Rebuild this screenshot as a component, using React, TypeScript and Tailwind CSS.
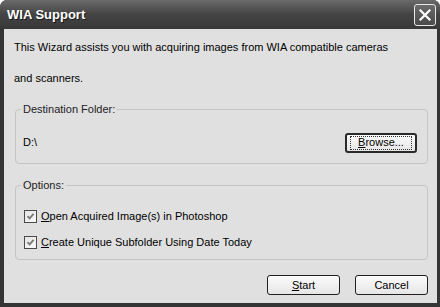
import React from "react";

function XpButton({
  children,
  isDefault,
  className,
}: {
  children: React.ReactNode;
  isDefault?: boolean;
  className?: string;
}) {
  return (
    <div
      className={
        "flex h-[20px] items-center justify-center rounded-[3px] bg-gradient-to-b from-[#fbfbfb] to-[#e6e6e6] text-[11px] text-black " +
        (isDefault ? "border-2 border-[#2a2a2a] " : "border border-[#202020] ") +
        (className ?? "")
      }
    >
      {isDefault ? (
        <span className="flex h-[14px] w-[calc(100%-6px)] items-center justify-center border border-dotted border-[#333]">
          {children}
        </span>
      ) : (
        children
      )}
    </div>
  );
}

function CheckRow({ accel, rest }: { accel: string; rest: string }) {
  return (
    <div className="flex items-center gap-[4px]">
      <div className="flex h-[13px] w-[13px] items-center justify-center border border-[#4a4a4a] bg-gradient-to-br from-[#e4e4e4] to-[#fafafa]">
        <svg width="9" height="9" viewBox="0 0 9 9">
          <path d="M1.5 4.2 L3.6 6.4 L7.6 1.8" fill="none" stroke="#7a7a7a" strokeWidth="1.9" />
        </svg>
      </div>
      <span className="text-[11px] leading-[13px] text-black">
        <span className="underline">{accel}</span>
        {rest}
      </span>
    </div>
  );
}

export default function App() {
  return (
    <div
      className="flex h-[307px] w-[440px] flex-col overflow-hidden rounded-t-[7px] bg-[#353535]"
      style={{ fontFamily: '"Liberation Sans", Arial, sans-serif' }}
    >
      {/* Title bar */}
      <div className="flex h-[29px] items-center justify-between bg-gradient-to-b from-[#6a6a6a] via-[#444] to-[#383838] pl-[7px] pr-[4px]">
        <span className="text-[13px] font-bold text-white [text-shadow:1px_1px_0_#1a1a1a]">WIA Support</span>
        <div className="flex h-[22px] w-[22px] items-center justify-center rounded-[3px] border border-[#e8e8e8] bg-gradient-to-b from-[#6a6a6a] to-[#4a4a4a]">
          <svg width="12" height="12" viewBox="0 0 12 12">
            <path d="M1.5 1.5 L10.5 10.5 M10.5 1.5 L1.5 10.5" stroke="#fff" strokeWidth="2.2" strokeLinecap="square" />
          </svg>
        </div>
      </div>

      {/* Body */}
      <div className="ml-[4px] mr-[3px] mb-[4px] flex flex-1 flex-col bg-[#e0e0e0] pt-[3px] text-[11px] text-black">
        <div className="pl-[10px] leading-[31px]">
          <p>This Wizard assists you with acquiring images from WIA compatible cameras</p>
          <p>and scanners.</p>
        </div>

        {/* Destination Folder group */}
        <div className="relative ml-[11px] mt-[15px] flex h-[55px] w-[413px] items-center justify-between rounded-[4px] border border-[#c4c4c4] pl-[7px] pr-[10px] pt-[12px]">
          <span className="absolute -top-[7px] left-[5px] bg-[#e0e0e0] px-[2px] leading-[13px] text-[#222]">
            Destination Folder:
          </span>
          <span>D:\</span>
          <XpButton isDefault className="w-[72px]">
            <span className="underline">B</span>rowse...
          </XpButton>
        </div>

        {/* Options group */}
        <div className="relative ml-[11px] mt-[21px] flex h-[75px] w-[413px] flex-col gap-[13px] rounded-[4px] border border-[#c4c4c4] pl-[8px] pt-[24px]">
          <span className="absolute -top-[7px] left-[5px] bg-[#e0e0e0] px-[2px] leading-[13px] text-[#222]">
            Options:
          </span>
          <CheckRow accel="O" rest="pen Acquired Image(s) in Photoshop" />
          <CheckRow accel="C" rest="reate Unique Subfolder Using Date Today" />
        </div>

        {/* Buttons */}
        <div className="ml-[263px] mt-[15px] flex gap-[15px]">
          <XpButton className="w-[73px]">
            <span className="underline">S</span>tart
          </XpButton>
          <XpButton className="w-[73px]">Cancel</XpButton>
        </div>
      </div>
    </div>
  );
}
